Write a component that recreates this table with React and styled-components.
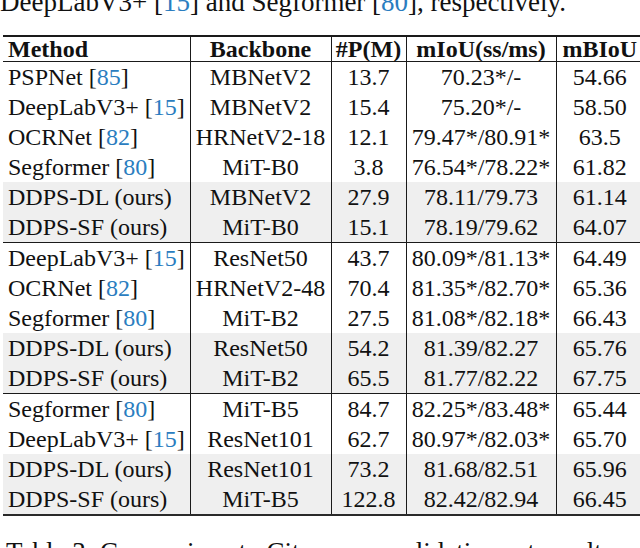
import React from "react";
import styled, { createGlobalStyle } from "styled-components";

const GlobalStyle = createGlobalStyle`
  html, body {
    margin: 0;
    padding: 0;
    background: #ffffff;
    overflow: hidden;
  }
  body {
    width: 640px;
    height: 548px;
    font-family: "Liberation Serif", "Times New Roman", serif;
    color: #111111;
  }
`;

const Page = styled.div`
  margin-top: -13px;
  width: 640px;
  overflow: hidden;
`;

const Prose = styled.p`
  margin: 0;
  padding-left: ${(p) => p.$indent || 0}px;
  font-size: 27px;
  line-height: 31px;
  white-space: nowrap;
`;

const Cite = styled.span`
  color: #2a7dc0;
`;

const TableWrap = styled.div`
  margin: 17px 0 21px 0;
  padding-left: 3px;
  overflow: hidden;
`;

const Table = styled.table`
  border-collapse: collapse;
  table-layout: fixed;
  width: 640px;
  font-size: 24px;
  border-top: 2px solid #1a1a1a;
  border-bottom: 2px solid #2a2a2a;
`;

const Group = styled.tbody`
  border-top: 1px solid #1a1a1a;
`;

const Row = styled.tr`
  background: ${(p) => (p.$shaded ? "#efefef" : "transparent")};
`;

const HeadCell = styled.th`
  height: 24px;
  padding: 0;
  font-weight: bold;
  line-height: 24px;
  white-space: nowrap;
  text-align: ${(p) => (p.$left ? "left" : "center")};
  padding-left: ${(p) => (p.$left ? "5px" : "0")};
  border-left: ${(p) => (p.$left ? "none" : "1px solid #1a1a1a")};
  border-bottom: 1px solid #1a1a1a;
`;

const Cell = styled.td`
  height: 30px;
  padding: 0;
  line-height: 30px;
  white-space: nowrap;
  text-align: ${(p) => (p.$left ? "left" : "center")};
  padding-left: ${(p) => (p.$left ? "5px" : "0")};
  border-left: ${(p) => (p.$left ? "none" : "1px solid #1a1a1a")};
`;

const groups = [
  [
    ["PSPNet", "85", "MBNetV2", "13.7", "70.23*/-", "54.66", false],
    ["DeepLabV3+", "15", "MBNetV2", "15.4", "75.20*/-", "58.50", false],
    ["OCRNet", "82", "HRNetV2-18", "12.1", "79.47*/80.91*", "63.5", false],
    ["Segformer", "80", "MiT-B0", "3.8", "76.54*/78.22*", "61.82", false],
    ["DDPS-DL (ours)", null, "MBNetV2", "27.9", "78.11/79.73", "61.14", true],
    ["DDPS-SF (ours)", null, "MiT-B0", "15.1", "78.19/79.62", "64.07", true],
  ],
  [
    ["DeepLabV3+", "15", "ResNet50", "43.7", "80.09*/81.13*", "64.49", false],
    ["OCRNet", "82", "HRNetV2-48", "70.4", "81.35*/82.70*", "65.36", false],
    ["Segformer", "80", "MiT-B2", "27.5", "81.08*/82.18*", "66.43", false],
    ["DDPS-DL (ours)", null, "ResNet50", "54.2", "81.39/82.27", "65.76", true],
    ["DDPS-SF (ours)", null, "MiT-B2", "65.5", "81.77/82.22", "67.75", true],
  ],
  [
    ["Segformer", "80", "MiT-B5", "84.7", "82.25*/83.48*", "65.44", false],
    ["DeepLabV3+", "15", "ResNet101", "62.7", "80.97*/82.03*", "65.70", false],
    ["DDPS-DL (ours)", null, "ResNet101", "73.2", "81.68/82.51", "65.96", true],
    ["DDPS-SF (ours)", null, "MiT-B5", "122.8", "82.42/82.94", "66.45", true],
  ],
];

export default function App() {
  return (
    <>
      <GlobalStyle />
      <Page>
        <Prose>
          DeepLabV3+ [<Cite>15</Cite>] and Segformer [<Cite>80</Cite>], respectively.
        </Prose>
        <TableWrap>
          <Table>
            <colgroup>
              <col style={{ width: 187 }} />
              <col style={{ width: 141 }} />
              <col style={{ width: 75 }} />
              <col style={{ width: 150 }} />
              <col style={{ width: 87 }} />
            </colgroup>
            <thead>
              <tr>
                <HeadCell $left>Method</HeadCell>
                <HeadCell>Backbone</HeadCell>
                <HeadCell>#P(M)</HeadCell>
                <HeadCell>mIoU(ss/ms)</HeadCell>
                <HeadCell>mBIoU</HeadCell>
              </tr>
            </thead>
            {groups.map((rows, gi) => (
              <Group key={gi}>
                {rows.map((r, ri) => (
                  <Row key={ri} $shaded={r[6]}>
                    <Cell $left>
                      {r[0]}
                      {r[1] && (
                        <>
                          {" "}[<Cite>{r[1]}</Cite>]
                        </>
                      )}
                    </Cell>
                    <Cell>{r[2]}</Cell>
                    <Cell>{r[3]}</Cell>
                    <Cell>{r[4]}</Cell>
                    <Cell>{r[5]}</Cell>
                  </Row>
                ))}
              </Group>
            ))}
          </Table>
        </TableWrap>
        <Prose $indent={6}>
          Table 3: Comparison to Cityscapes validation set results.
        </Prose>
      </Page>
    </>
  );
}
